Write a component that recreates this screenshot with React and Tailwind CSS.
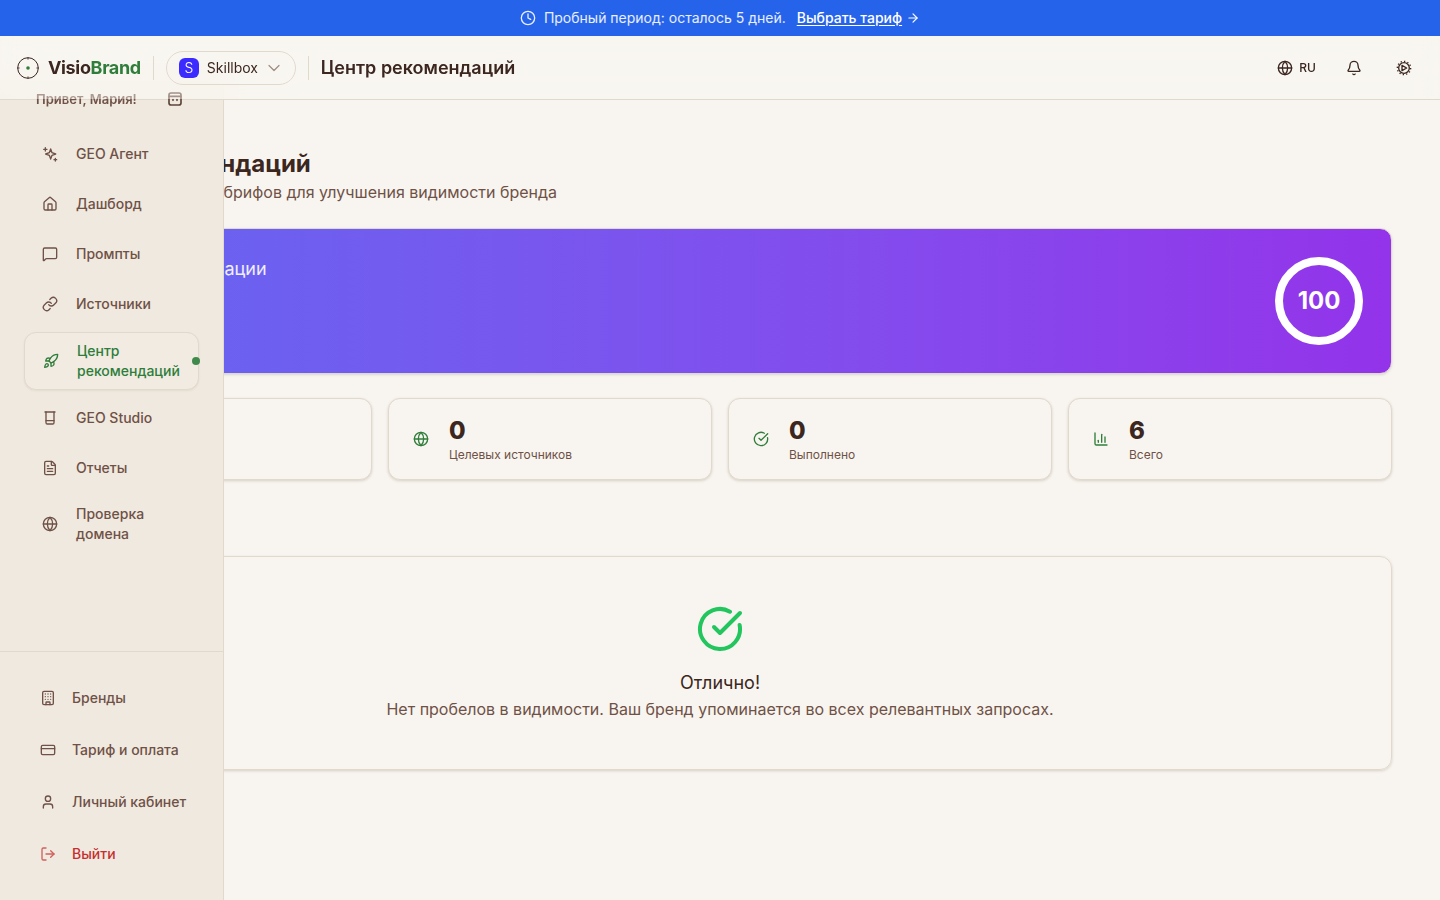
import React from 'react';
import {
    ArrowRight,
    Bell,
    Building,
    ChartColumn,
    ChevronDown,
    CircleCheckBig,
    Clock,
    CreditCard,
    FileText,
    Globe,
    House,
    Link,
    LogOut,
    MessageSquare,
    Rocket,
    Target,
    User,
} from 'lucide-react';

function AgentIcon(props) {
    return (
        <svg {...props} viewBox="0 0 24 24" fill="none" stroke="currentColor" strokeWidth="2" strokeLinecap="round" strokeLinejoin="round">
            <path d="M13 4.5l2 5.5 5.5 2-5.5 2-2 5.5-2-5.5-5.5-2 5.5-2z" />
            <path d="M5 2.5v5M2.5 5h5" />
            <path d="M20 18.5v4M18 20.5h4" />
        </svg>
    );
}

function StudioIcon(props) {
    return (
        <svg {...props} viewBox="0 0 24 24" fill="none" stroke="currentColor" strokeWidth="2" strokeLinecap="round" strokeLinejoin="round">
            <path d="M4.5 3h15" />
            <path d="M6 3v16a2 2 0 0 0 2 2h8a2 2 0 0 0 2-2V3" />
            <path d="M6 16h12" />
        </svg>
    );
}

function GearIcon(props) {
    return (
        <svg {...props} viewBox="0 0 24 24" fill="none" stroke="currentColor" strokeLinejoin="round">
            <circle cx="12" cy="12" r="8" strokeWidth="2" />
            <circle cx="12" cy="12" r="10" strokeWidth="2" strokeDasharray="2 3.2" />
            <path d="M9 8l7 4-7 4z" strokeWidth="2" />
        </svg>
    );
}

function GreetIcon(props) {
    return (
        <svg {...props} viewBox="0 0 24 24" fill="none" stroke="currentColor" strokeWidth="2.5" strokeLinecap="round">
            <rect x="3" y="3" width="18" height="18" rx="3" />
            <path d="M3 8h18" />
            <path d="M9 13v1M15 13v1" />
        </svg>
    );
}

function Logo() {
    return (
        <svg width="22" height="22" viewBox="0 0 22 22" fill="none">
            <circle cx="11" cy="11" r="10.3" stroke="#3b2620" strokeWidth="1" />
            <path d="M11 0.5v2M11 19.5v2M0.5 11h2M19.5 11h2" stroke="#3b2620" strokeWidth="1" />
            <circle cx="11" cy="11" r="1.8" fill="#2f7d3a" />
        </svg>
    );
}

const navItems = [
    { label: 'GEO Агент', icon: AgentIcon },
    { label: 'Дашборд', icon: House },
    { label: 'Промпты', icon: MessageSquare },
    { label: 'Источники', icon: Link },
    { label: 'Центр рекомендаций', icon: Rocket, active: true },
    { label: 'GEO Studio', icon: StudioIcon },
    { label: 'Отчеты', icon: FileText },
    { label: 'Проверка домена', icon: Globe },
];

const bottomItems = [
    { label: 'Бренды', icon: Building },
    { label: 'Тариф и оплата', icon: CreditCard },
    { label: 'Личный кабинет', icon: User },
];

const stats = [
    { value: '6', label: 'Открытых', icon: Target },
    { value: '0', label: 'Целевых источников', icon: Globe },
    { value: '0', label: 'Выполнено', icon: CircleCheckBig },
    { value: '6', label: 'Всего', icon: ChartColumn },
];

function Sidebar() {
    return (
        <aside className="absolute left-0 top-20 flex h-[820px] w-[224px] flex-col border-r border-[#e2d9cd] bg-[#f0e9e0]">
            {/* the greeting row sits half under the translucent header */}
            <div className="relative z-30 flex h-[31px] shrink-0 items-end justify-between pb-[4px] pl-9 pr-[40px] [mask-image:linear-gradient(to_bottom,rgba(0,0,0,0.55)_60%,black_61%)]">
                <span className="text-[13px] font-semibold leading-4 text-[#6f5146]">Привет, Мария!</span>
                <GreetIcon width="16" height="16" className="text-[#5f4338]" />
            </div>
            <nav className="flex flex-1 flex-col gap-2 px-6 pt-[22px]">
                {navItems.map((item) => (
                    <div
                        key={item.label}
                        className={
                            item.active
                                ? 'relative -my-px flex min-h-[58px] items-center gap-[18px] rounded-xl border border-[#e2d9cd] bg-[#f1ebe2] pl-[18px] pr-4 shadow-[0_1px_2px_rgba(90,60,30,0.08)]'
                                : 'flex min-h-[42px] items-center gap-[18px] py-[7px] pl-[18px] pr-4'
                        }
                    >
                        <item.icon width="16" height="16" className={item.active ? 'shrink-0 text-[#2f7d3a]' : 'shrink-0 text-[#6f5146]'} />
                        <span className={item.active ? 'text-sm font-medium leading-5 text-[#2f7d3a]' : 'text-sm font-medium leading-5 text-[#6f5146]'}>
                            {item.label}
                        </span>
                        {item.active && <span className="absolute -right-[2px] top-6 size-2 rounded-full bg-[#3f8a4a]" />}
                    </div>
                ))}
            </nav>
            <div className="flex h-[249px] shrink-0 flex-col gap-2 border-t border-[#e2d9cd] pl-10 pr-2 pt-6">
                {bottomItems.map((item) => (
                    <div key={item.label} className="flex h-11 items-center gap-4">
                        <item.icon size={16} className="shrink-0 text-[#6f5146]" />
                        <span className="whitespace-nowrap text-sm font-medium text-[#6f5146]">{item.label}</span>
                    </div>
                ))}
                <div className="flex h-11 items-center gap-4">
                    <LogOut size={16} className="shrink-0 text-[#d0605e]" />
                    <span className="text-sm font-medium text-[#c62f2f]">Выйти</span>
                </div>
            </div>
        </aside>
    );
}

function Header() {
    return (
        <header className="relative z-20 flex h-16 items-center justify-between border-b border-[#e2d9cd] bg-[#f8f5f0]/75 pl-[17px] pr-7 backdrop-blur-md">
            <div className="flex items-center">
                <Logo />
                <span className="ml-[9px] text-lg font-bold tracking-[-0.35px] text-[#3b2620]">
                    Visio<span className="text-[#2f7d3a]">Brand</span>
                </span>
                <span className="ml-3 h-6 w-px bg-[#e2d9cd]" />
                <div className="ml-3 flex h-[34px] w-[130px] items-center rounded-full border border-[#e2d9cd] pl-3">
                    <span className="flex size-5 items-center justify-center rounded-md bg-[#3b2bff] text-sm font-light text-white">S</span>
                    <span className="ml-2 text-sm text-[#3b2620]">Skillbox</span>
                    <ChevronDown size={20} strokeWidth={1.5} className="ml-[6px] text-[#a08f84]" />
                </div>
                <span className="ml-3 h-6 w-px bg-[#e2d9cd]" />
                <h2 className="ml-3 text-lg font-semibold text-[#3b2620]">Центр рекомендаций</h2>
            </div>
            <div className="flex items-center">
                <Globe size={16} className="text-[#3b2620]" />
                <span className="ml-[6px] text-xs font-medium text-[#3b2620]">RU</span>
                <Bell size={16} className="ml-[30px] text-[#3b2620]" />
                <GearIcon width="16" height="16" className="ml-[34px] text-[#3b2620]" />
            </div>
        </header>
    );
}

export default function App() {
    return (
        <div className="relative h-[900px] w-[1440px] overflow-hidden bg-[#f8f5f0] font-['Inter',sans-serif]">
            <div className="relative z-30 flex h-9 items-center justify-center bg-[#2563eb] text-sm text-white">
                <Clock size={16} className="opacity-90" />
                <span className="ml-2 text-white/90">Пробный период: осталось 5 дней.</span>
                <span className="ml-[11px] font-medium underline underline-offset-2">Выбрать тариф</span>
                <ArrowRight size={14} className="ml-1" />
            </div>
            <Header />
            <Sidebar />
            <main className="px-12 pt-[48px]">
                <h1 className="text-2xl font-bold leading-8 text-[#3b2620]">Центр рекомендаций</h1>
                <p className="leading-6 text-[#6f5146]">Обзор идей и контент брифов для улучшения видимости бренда</p>
                <section className="mt-6 flex h-[146px] items-center justify-between rounded-xl border border-[#e2d9cd] bg-gradient-to-r from-[#6366f1] to-[#9333ea] pl-[26px] pr-7 shadow-sm">
                    <div className="-mt-[64px] text-lg text-white/90">Рейтинг оптимизации</div>
                    <div className="flex size-[88px] items-center justify-center rounded-full border-[8px] border-white text-2xl font-bold text-white">
                        100
                    </div>
                </section>
                <section className="mt-6 grid grid-cols-4 gap-4">
                    {stats.map((stat) => (
                        <div key={stat.label} className="flex h-[82px] items-center gap-5 rounded-xl border border-[#e2d9cd] bg-[#f8f5f0] pl-6 shadow-[0_1px_3px_rgba(90,60,30,0.2)]">
                            <stat.icon size={16} className="shrink-0 text-[#2f7d3a]" />
                            <div>
                                <div className="text-2xl font-extrabold leading-8 text-[#3b2620]">{stat.value}</div>
                                <div className="text-xs leading-4 text-[#6f5146]">{stat.label}</div>
                            </div>
                        </div>
                    ))}
                </section>
                <h3 className="mt-[44px] h-8 text-xl font-semibold text-[#3b2620]">Бриф</h3>
                <section className="flex h-[214px] flex-col items-center rounded-xl border border-[#e2d9cd] pt-[48px] shadow-[0_1px_3px_rgba(90,60,30,0.2)]">
                    <CircleCheckBig size={48} className="text-[#22c55e]" />
                    <div className="mt-4 text-lg font-normal leading-7 text-[#3b2620]">Отлично!</div>
                    <div className="leading-6 text-[#6f5146]">Нет пробелов в видимости. Ваш бренд упоминается во всех релевантных запросах.</div>
                </section>
            </main>
        </div>
    );
}
